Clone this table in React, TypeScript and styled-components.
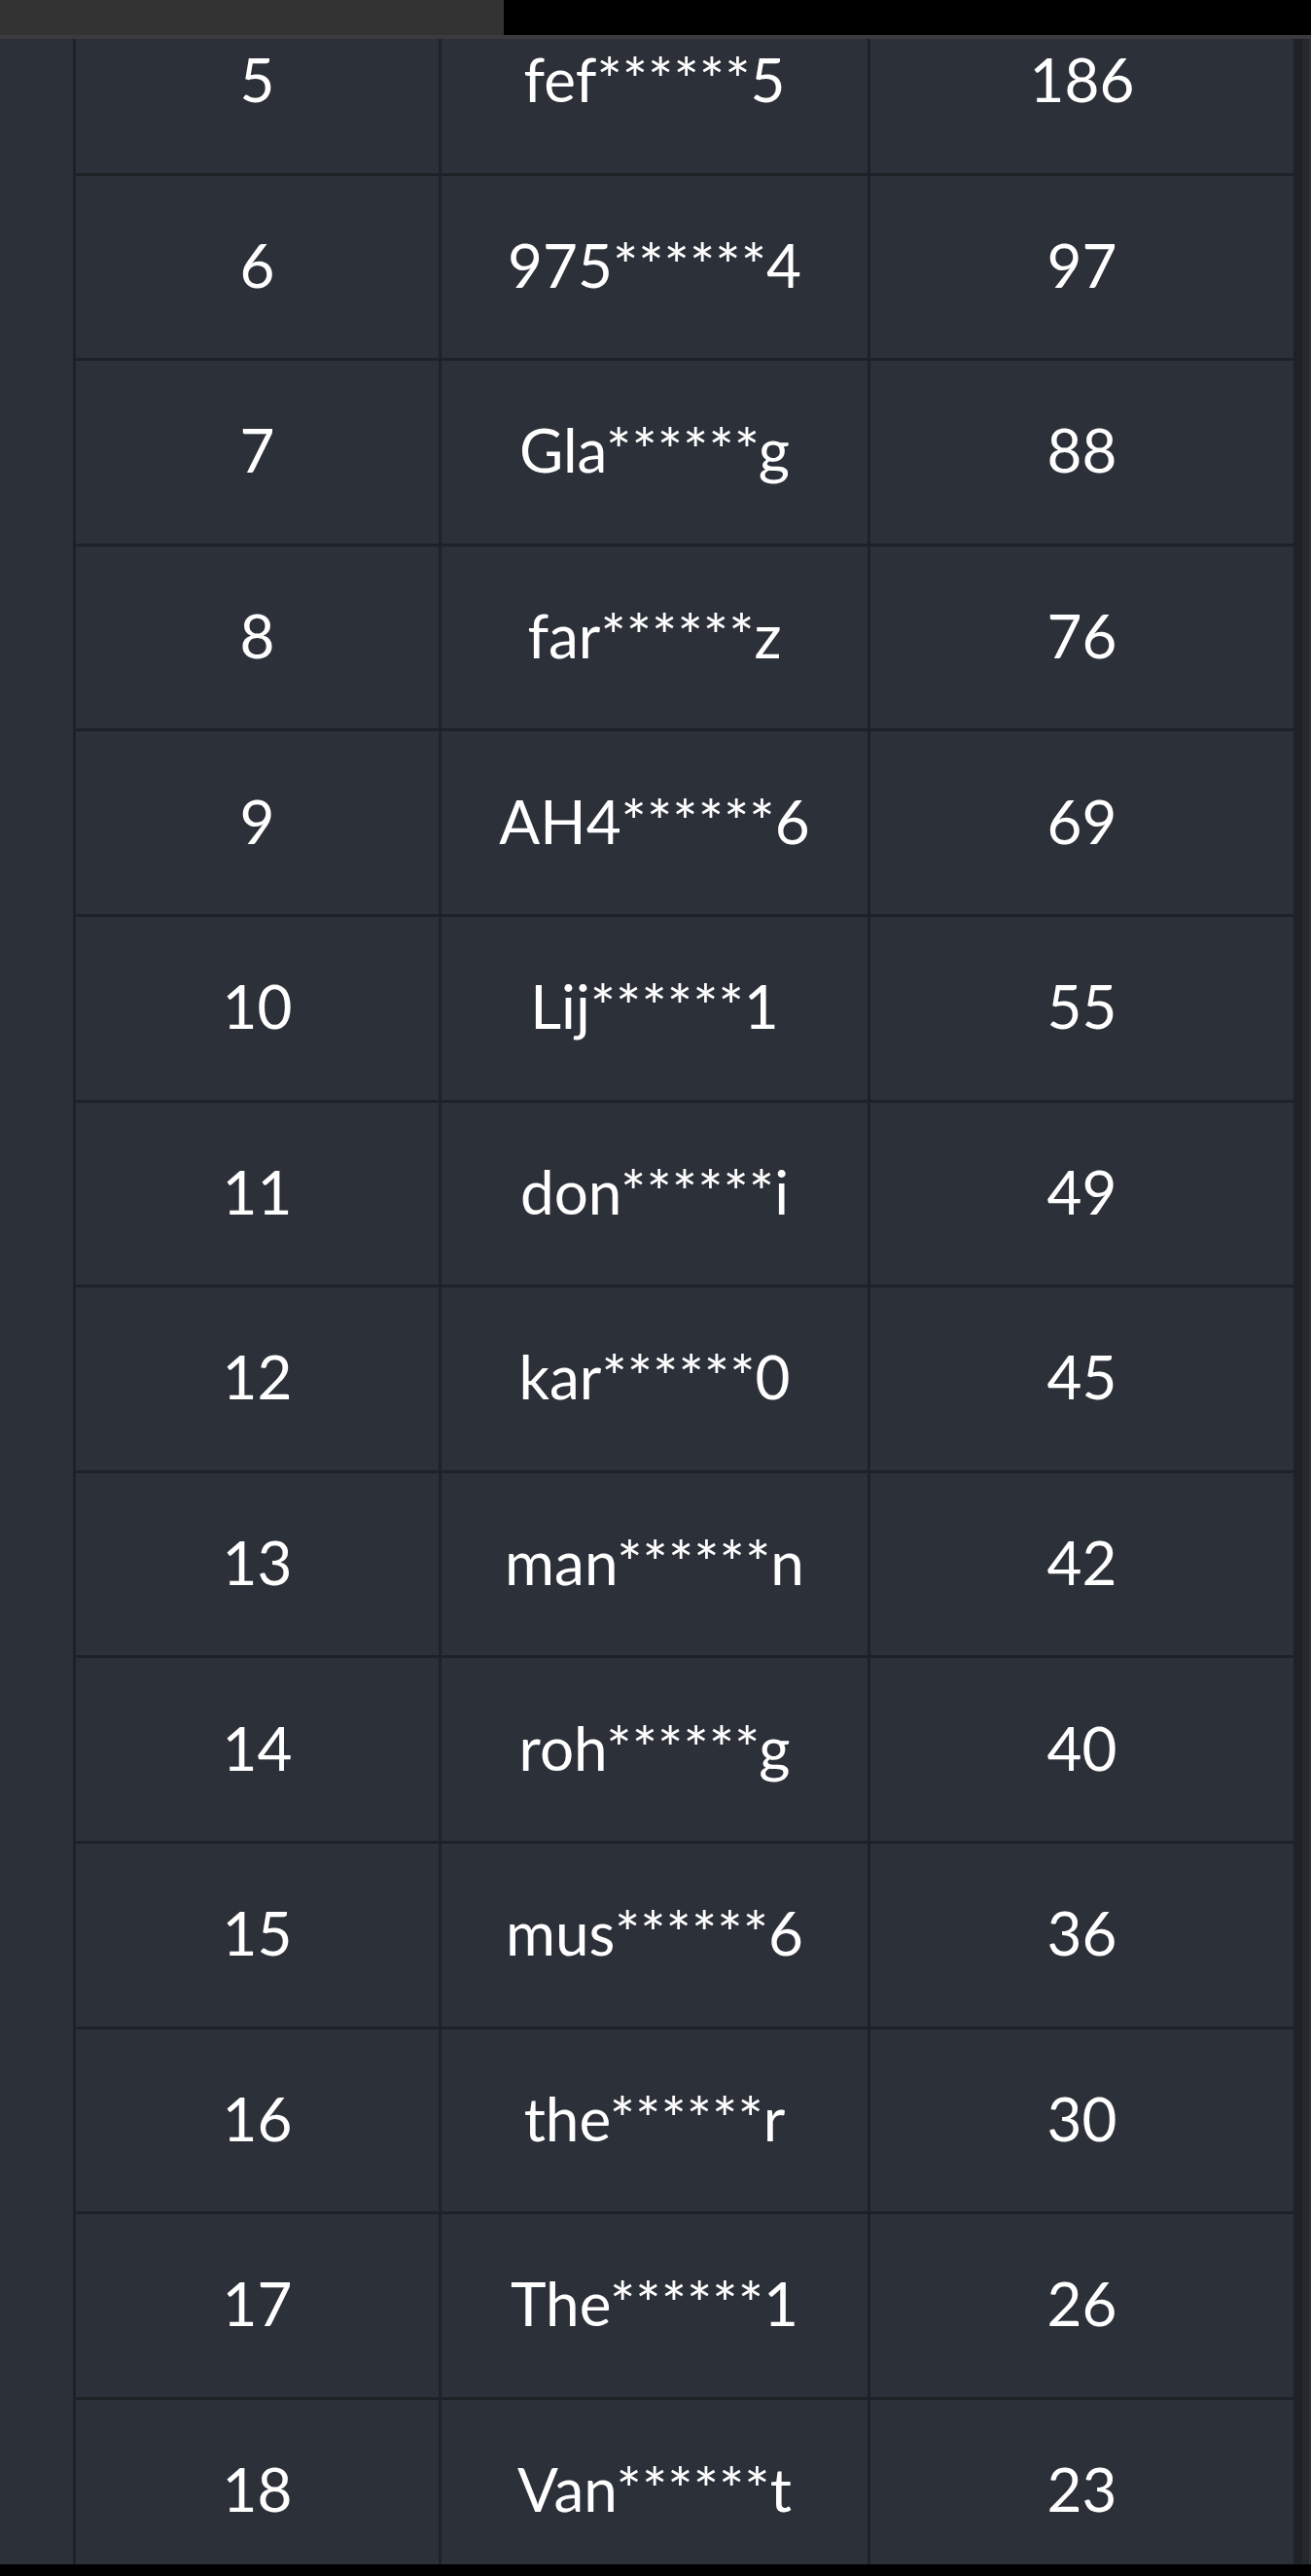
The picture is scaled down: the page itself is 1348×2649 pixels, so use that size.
import React from "react";
import styled, { createGlobalStyle } from "styled-components";

const Global = createGlobalStyle`
  html, body { margin: 0; padding: 0; background: #000; }
  body { font-family: "Lato", "Noto Sans", sans-serif; }
  #root { width: 1348px; }
`;

const Page = styled.div`
  width: 1348px;
  height: 2649px;
  display: flex;
  flex-direction: column;
  background: #000;
  overflow: hidden;
`;

const TabBar = styled.div`
  flex: 0 0 auto;
  display: grid;
  grid-template-columns: 518px 1fr;
  height: 36px;
  border-bottom: 4px solid #3b3b3d;
`;

const Tab = styled.div<{ $active?: boolean }>`
  background: ${(p) => (p.$active ? "#333333" : "#000000")};
`;

const Viewport = styled.div`
  flex: 0 0 2597px;
  display: flex;
  overflow: hidden;
  background: #2c3139;
`;

const SidePanel = styled.div`
  flex: 0 0 75px;
  background: #2c3139;
`;

const ScrollEdge = styled.div`
  flex: 0 0 15px;
  background: linear-gradient(to right, #24272c 0, #24272c 7px, #2c3139 7px);
`;

const Table = styled.div`
  flex: 0 0 1258px;
  display: flex;
  flex-direction: column;
  gap: 3px;
  margin-top: -50px;
  align-self: flex-start;
  background: #1e2227;
  border-left: 3px solid #1e2227;
  border-right: 3px solid #1e2227;
`;

const Row = styled.div`
  display: grid;
  grid-template-columns: 373px 438px 435px;
  column-gap: 3px;
  height: 187.6px;
`;

const Cell = styled.div`
  display: flex;
  align-items: center;
  justify-content: center;
  box-sizing: border-box;
  padding-bottom: 5px;
  background: #2c3139;
  color: #ffffff;
  font-size: 62px;
  font-weight: 400;
  line-height: 1;
  white-space: nowrap;
`;

const rows: [number, string, number][] = [
  [5, "fef******5", 186],
  [6, "975******4", 97],
  [7, "Gla******g", 88],
  [8, "far******z", 76],
  [9, "AH4******6", 69],
  [10, "Lij******1", 55],
  [11, "don******i", 49],
  [12, "kar******0", 45],
  [13, "man******n", 42],
  [14, "roh******g", 40],
  [15, "mus******6", 36],
  [16, "the******r", 30],
  [17, "The******1", 26],
  [18, "Van******t", 23],
];

export default function App() {
  return (
    <>
      <Global />
      <Page>
        <TabBar>
          <Tab $active />
          <Tab />
        </TabBar>
        <Viewport>
          <SidePanel />
          <Table>
            {rows.map(([rank, name, count]) => (
              <Row key={rank}>
                <Cell>{rank}</Cell>
                <Cell>{name}</Cell>
                <Cell>{count}</Cell>
              </Row>
            ))}
          </Table>
          <ScrollEdge />
        </Viewport>
      </Page>
    </>
  );
}
